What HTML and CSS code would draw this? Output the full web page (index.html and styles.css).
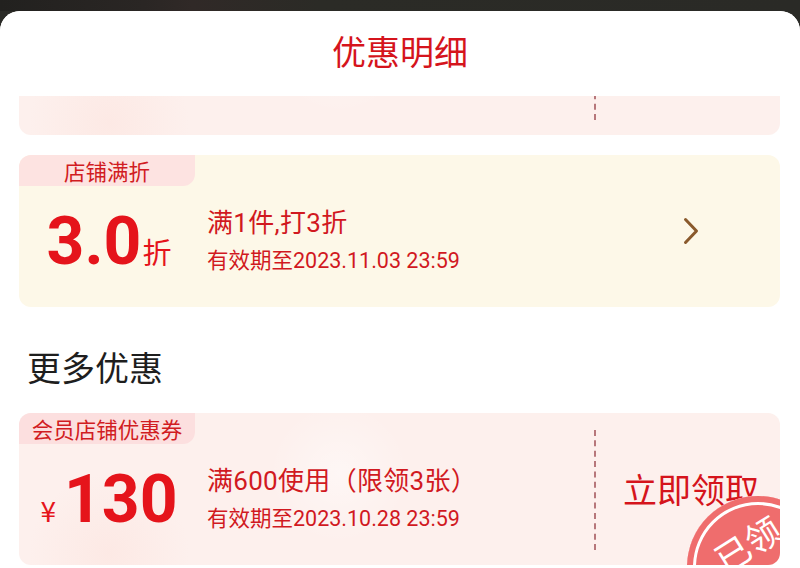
FILE: index.html
```html
<!DOCTYPE html>
<html lang="zh-CN">
<head>
<meta charset="utf-8">
<title>优惠明细</title>
<link rel="stylesheet" href="styles.css">
</head>
<body>
<div class="topbar"></div>
<div class="sheet">
  <div class="header"><h1 class="title">优惠明细</h1></div>
  <div class="list">
    <div class="card card-pink card-hidden">
      <div class="main">
        <div class="tag">会员店铺优惠券</div>
        <div class="row">
          <div class="amount"><span class="unit">¥</span><span class="num">50</span></div>
          <div class="info">
            <div class="line1">满300使用（限领3张）</div>
            <div class="line2">有效期至2023.10.28 23:59</div>
          </div>
        </div>
      </div>
      <div class="action dashed"><span class="get">立即领取</span></div>
    </div>

    <div class="card card-cream">
      <div class="main">
        <div class="tag">店铺满折</div>
        <div class="row">
          <div class="amount"><span class="num">3.0</span><span class="suffix">折</span></div>
          <div class="info">
            <div class="line1">满1件,打3折</div>
            <div class="line2">有效期至2023.11.03 23:59</div>
          </div>
        </div>
      </div>
      <div class="action">
        <svg class="chev" width="16" height="28" viewBox="0 0 16 28"><path d="M2.5 2.5 L13.5 14 L2.5 25.5" fill="none" stroke="#8a5a2c" stroke-width="3" stroke-linecap="round" stroke-linejoin="round"/></svg>
      </div>
    </div>

    <h2 class="section">更多优惠</h2>

    <div class="card card-pink">
      <div class="main">
        <div class="tag">会员店铺优惠券</div>
        <div class="row">
          <div class="amount"><span class="unit">¥</span><span class="num">130</span></div>
          <div class="info">
            <div class="line1">满600使用（限领3张）</div>
            <div class="line2">有效期至2023.10.28 23:59</div>
          </div>
        </div>
      </div>
      <div class="action dashed"><span class="get">立即领取</span></div>
      <div class="stamp"><span class="stamp-text">已领</span></div>
    </div>
  </div>
</div>
</body>
</html>
```

FILE: styles.css
```css
* { box-sizing: border-box; }
html, body { margin: 0; padding: 0; }
body {
  width: 800px;
  height: 568px;
  overflow: hidden;
  background: #2a2a26;
  font-family: Roboto, "Noto Sans CJK SC", sans-serif;
}
.topbar {
  height: 11px;
  background: linear-gradient(90deg, #22211f 0%, #2a2624 18%, #302927 24%, #2b2b26 40%, #2a2a26 100%);
}
.sheet {
  height: 557px;
  background: #fff;
  border-radius: 20px 20px 0 0;
  overflow: hidden;
  display: flex;
  flex-direction: column;
}
.header {
  height: 85px;
  flex: none;
  background: #fff;
  position: relative;
  z-index: 2;
  padding-top: 20px;
}
.title {
  margin: 0;
  text-align: center;
  font-family: "Noto Sans CJK SC", sans-serif;
  font-weight: 400;
  font-size: 34px;
  line-height: 40px;
  color: #d5141c;
}
.list {
  flex: 1;
  overflow: hidden;
  padding: 0 20px 0 19px;
  display: flex;
  flex-direction: column;
}
.card {
  position: relative;
  flex: none;
  height: 152px;
  border-radius: 12px;
  overflow: hidden;
  display: flex;
}
.card-hidden { margin-top: -113px; margin-bottom: 20px; }
.card-hidden .row { padding-bottom: 19px; }
.card-cream { background: #fdf8e8; }
.card-cream .tag { background: #fde3e1; }
.card-pink {
  background:
    radial-gradient(circle at 320px 60px, rgba(255, 255, 255, 0.45) 0, rgba(255, 255, 255, 0) 70px),
    radial-gradient(circle at 90px 140px, rgba(252, 226, 220, 0.5) 0, rgba(252, 226, 220, 0) 80px),
    #fdf0ed;
}
.card-pink .tag { background: #fcdfdf; }
.main {
  flex: 1;
  display: flex;
  flex-direction: column;
}
.tag {
  align-self: flex-start;
  width: 176px;
  height: 31px;
  border-radius: 0 0 12px 0;
  text-align: center;
  font-family: "Noto Sans CJK SC", sans-serif;
  font-size: 21.5px;
  line-height: 31px;
  color: #d11c22;
}
.row {
  flex: 1;
  display: flex;
  align-items: center;
  padding-bottom: 10px;
}
.amount {
  width: 180px;
  margin-right: 8px;
  text-align: center;
  color: #e5141b;
  white-space: nowrap;
  line-height: 1;
}
.num {
  font-family: Roboto, sans-serif;
  font-weight: 700;
  font-size: 66px;
}
.unit {
  font-family: "Noto Sans CJK SC", sans-serif;
  font-size: 28px;
  margin-right: 8px;
}
.suffix {
  font-family: "Noto Sans CJK SC", sans-serif;
  font-size: 29px;
  margin-left: 1px;
}
.info { color: #d1191f; margin-top: -2px; }
.line1 {
  font-size: 26px;
  line-height: 36px;
  letter-spacing: 0.3px;
}
.line2 {
  font-size: 21.5px;
  line-height: 30px;
  margin-top: 5px;
}
.action {
  width: 186px;
  flex: none;
  display: flex;
  align-items: center;
  justify-content: center;
}
.card-cream .action { padding-left: 8px; }
.dashed {
  margin: 17px 0 15px;
  border-left: 2px dashed #b7777b;
}
.chev { display: block; }
.get {
  font-family: "Noto Sans CJK SC", sans-serif;
  font-size: 34px;
  line-height: 40px;
  color: #d5141c;
  margin: -2px 0 0 6px;
}
.section {
  margin: 0;
  padding: 42px 0 0 8px;
  height: 106px;
  flex: none;
  font-family: "Noto Sans CJK SC", sans-serif;
  font-weight: 400;
  font-size: 34px;
  line-height: 36px;
  color: #1e1e1e;
}
.stamp {
  position: absolute;
  left: 668px;
  top: 83px;
  width: 142px;
  height: 142px;
  border-radius: 50%;
  background: #ef6d6d;
  box-shadow: inset 0 0 0 6px #ef6d6d, inset 0 0 0 9px #fff;
}
.stamp-text {
  position: absolute;
  left: 25px;
  top: 29px;
  font-family: "Noto Sans CJK SC", sans-serif;
  font-size: 35px;
  line-height: 36px;
  color: #fff;
  transform: rotate(-32deg);
  transform-origin: center;
  white-space: nowrap;
}
```
